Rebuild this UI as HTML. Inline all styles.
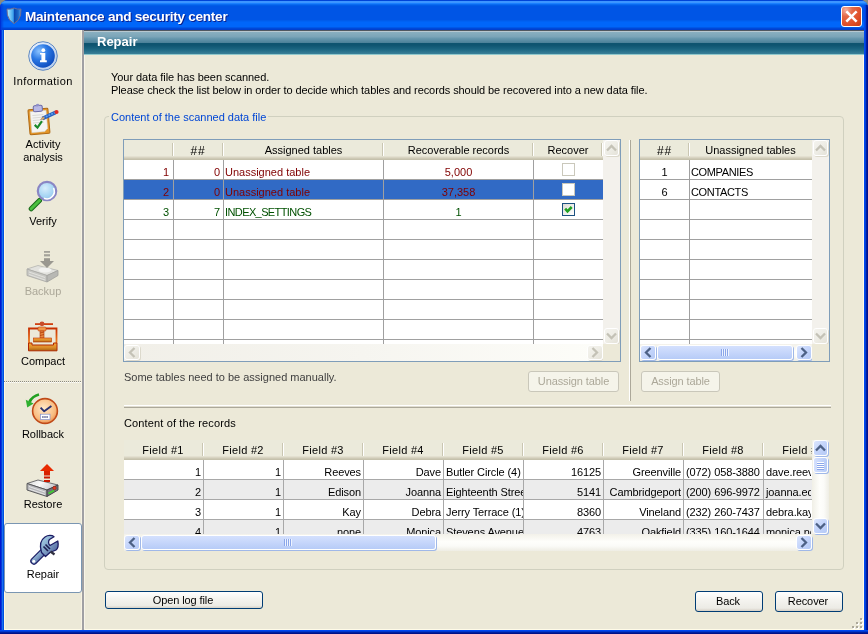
<!DOCTYPE html><html><head><meta charset="utf-8"><style>
*{box-sizing:border-box;margin:0;padding:0}
html,body{width:868px;height:634px;overflow:hidden;background:#8c8a7e}
body{position:relative;font-family:"Liberation Sans",sans-serif;font-size:11px;color:#000}
.a{position:absolute}
.t{position:absolute;white-space:nowrap;line-height:13px;letter-spacing:0}
.c{text-align:center}
.r{text-align:right}
#win{will-change:transform;position:absolute;left:0;top:0;width:868px;height:634px;border-radius:8px 8px 0 0;overflow:hidden;background:#0050e0}
#title{position:absolute;left:0;top:0;width:868px;height:30px;background:linear-gradient(to bottom,#0044d8 0px,#0044d8 1px,#3d95ff 1px,#3d95ff 2px,#3d95ff 2px,#3d95ff 3px,#1a80ff 3px,#1a80ff 4px,#0a6af0 4px,#0a6af0 5px,#005de8 5px,#005de8 6px,#0055e5 6px,#0055e5 7px,#0055e5 7px,#0055e5 8px,#0055e5 8px,#0055e5 9px,#0055e5 9px,#0055e5 10px,#0055e5 10px,#0055e5 11px,#0055e5 11px,#0055e5 12px,#0055e5 12px,#0055e5 13px,#0055e5 13px,#0055e5 14px,#0055e5 14px,#0055e5 15px,#0055e5 15px,#0055e5 16px,#0055e5 16px,#0055e5 17px,#0055e5 17px,#0055e5 18px,#0055e5 18px,#0055e5 19px,#0055e5 19px,#0055e5 20px,#005cec 20px,#005cec 21px,#0062f4 21px,#0062f4 22px,#0066fa 22px,#0066fa 23px,#0066fa 23px,#0066fa 24px,#0066fa 24px,#0066fa 25px,#0066fa 25px,#0066fa 26px,#0066fa 26px,#0066fa 27px,#0058e8 27px,#0058e8 28px,#0048d8 28px,#0048d8 29px,#0040d0 29px,#0040d0 30px)}
#lb{left:0;top:30px;width:4px;height:604px;background:linear-gradient(to right,#0018d0 0,#0018d0 1px,#0838d8 1px,#0838d8 2px,#1870f0 2px,#1870f0 3px,#0050e0 3px)}
#rb{left:864px;top:5px;width:4px;height:629px;background:linear-gradient(to right,#0048f0 0,#0048f0 1px,#0040d8 1px,#0040d8 2px,#0020a0 2px,#0020a0 3px,#001090 3px)}
#bb{left:0;top:630px;width:868px;height:4px;background:linear-gradient(to bottom,#0048f0 0,#0048f0 1px,#0038d0 1px,#0038d0 2px,#0020a0 2px,#0020a0 3px,#001088 3px)}
#client{left:4px;top:30px;width:860px;height:600px;background:#ece9d8;border-left:1px solid #fff8e0;border-right:1px solid #fffbe8;border-bottom:1px solid #fffbe8}
.ttl{position:absolute;left:25px;top:9px;font:bold 13.6px/16px "Liberation Sans",sans-serif;letter-spacing:-0.27px;color:#fff;text-shadow:1px 1px 0 #0a1e8c;white-space:nowrap}
.xbtn{position:absolute;left:841px;top:6px;width:21px;height:21px;border:1px solid #fff;border-radius:3px;
background:radial-gradient(circle at 20% 15%,#f4b0a0 0,#e46a48 30%,#e0502a 65%,#c83c14 100%)}
.hdr{left:84px;top:30px;width:780px;height:25px;
background:linear-gradient(to bottom,#505860 0,#505860 1px,#b8c8d0 1px,#b8c8d0 2px,#8ab0c0 2px,#7aa4b8 7px,#6a9ab0 8px,#4a8098 13px,#0e5470 13px,#0e5470 15px,#1a6480 19px,#3a8098 24px,#80c0c8 24px,#a0d0d0 25px)}
.hdrt{position:absolute;left:97px;top:34px;font:bold 13px/16px "Liberation Sans",sans-serif;color:#fff;white-space:nowrap}
.gb{position:absolute;left:104px;top:116px;width:740px;height:454px;border:1px solid #d0d0bf;border-radius:4px}
.gbl{position:absolute;left:109px;top:110px;padding:0 2px;background:#ece9d8;color:#0046d5;line-height:13px;white-space:nowrap;letter-spacing:0}
.lv{position:absolute;border:1px solid #7f9db9;background:#fff;overflow:hidden}
.lvh{position:absolute;left:0;top:0;height:20px;background:linear-gradient(to bottom,#ebeadb 0,#ebeadb 16px,#e3e0d0 16px,#dcd8c5 17px,#cfcab5 18px,#c5c1ac 20px)}
.hs{position:absolute;top:3px;width:2px;height:13px;border-left:1px solid #cac6b2;border-right:1px solid #fff}
.vg{position:absolute;width:1px;background:#a0a0a0}
.hg{position:absolute;height:1px;background:#a0a0a0}
.sbtrk{position:absolute;background:#f3f1ec}
.dbtn{position:absolute;border:1px solid #fff;border-radius:2px;background:linear-gradient(135deg,#f4f3ee,#e8e6dc);box-shadow:0 0 0 0 #fff}
.ebtn{position:absolute;border:1px solid #fff;border-radius:2px;background:linear-gradient(135deg,#d6e2fc 0,#c4d4f8 50%,#b0c6f4 100%)}
.thumb{position:absolute;border:1px solid #fff;border-radius:2px;background:linear-gradient(to bottom,#cddafc,#c0d0f8 50%,#b8cbf6)}
.btn{position:absolute;padding-right:2px;border:1px solid #003c74;border-radius:3px;background:linear-gradient(to bottom,#fff 0,#f5f4f0 40%,#ecebe5 85%,#d6d0c5 100%);text-align:center;color:#000;line-height:16px;letter-spacing:-0.1px}
.btnd{position:absolute;border:1px solid #c9c7ba;border-radius:3px;background:#f5f4ea;text-align:center;color:#aca899;letter-spacing:-0.1px}
.red{color:#800000}.grn{color:#005000}
.cb{position:absolute;width:13px;height:13px;border:1px solid #cac8bb;background:#fff}
</style></head><body><div id="win">
<div id="title"></div><div class="a" id="lb"></div><div class="a" style="left:0;top:4px;width:4px;height:26px;background:linear-gradient(to right,#0020c8,#0040e0 1px,rgba(0,80,240,0) 4px)"></div><div class="a" id="rb"></div><div class="a" id="bb"></div><div class="a" id="client"></div>
<svg class="a" style="left:4px;top:4px" width="20" height="22" viewBox="0 0 20 22"><defs><linearGradient id="sh" x1="0" x2="1"><stop offset="0" stop-color="#b8f0ff"/><stop offset="0.45" stop-color="#3aa0ee"/><stop offset="0.52" stop-color="#0a48b0"/><stop offset="0.8" stop-color="#1a68c8"/><stop offset="1" stop-color="#5aa8ee"/></linearGradient></defs><path d="M3 5 Q6.5 5.6 10 4 Q13.5 5.6 17 5 L16.6 11 Q15.2 17 10 19.6 Q4.8 17 3.4 11 Z" fill="url(#sh)" stroke="#706c90" stroke-width="1"/></svg>
<div class="ttl">Maintenance and security center</div>
<div class="xbtn"><svg class="a" style="left:0;top:0" width="19" height="19" viewBox="0 0 19 19"><path d="M5.2 5.2 L13.8 13.8 M13.8 5.2 L5.2 13.8" stroke="#fff" stroke-width="2.5" stroke-linecap="square"/></svg></div>
<div class="a" style="left:81px;top:30px;width:1px;height:600px;background:#f7f3e3"></div>
<div class="a" style="left:82px;top:30px;width:2px;height:600px;background:#a0a0a4"></div>
<div class="a" style="left:84px;top:55px;width:1px;height:575px;background:#f8f5e8"></div>
<div class="a hdr"></div><div class="hdrt">Repair</div>
<div class="t c" style="left:4px;top:75px;width:78px;letter-spacing:0.4px">Information</div>
<div class="t c" style="left:4px;top:138px;width:78px;">Activity</div>
<div class="t c" style="left:4px;top:151px;width:78px;">analysis</div>
<div class="t c" style="left:4px;top:215px;width:78px;">Verify</div>
<div class="t c" style="left:4px;top:285px;width:78px;color:#aca899;">Backup</div>
<div class="t c" style="left:4px;top:355px;width:78px;">Compact</div>
<div class="t c" style="left:4px;top:428px;width:78px;">Rollback</div>
<div class="t c" style="left:4px;top:498px;width:78px;">Restore</div>
<div class="a" style="left:4px;top:381px;width:78px;height:1px;background:repeating-linear-gradient(to right,#8c8a80 0,#8c8a80 1px,transparent 1px,transparent 2px)"></div>
<div class="a" style="left:4px;top:382px;width:78px;height:1px;background:repeating-linear-gradient(to right,#fff 0,#fff 1px,transparent 1px,transparent 2px)"></div>
<div class="a" style="left:4px;top:523px;width:78px;height:70px;border:1px solid #7a96b2;border-radius:3px;background:#fff"></div>
<div class="t c" style="left:4px;top:568px;width:78px;">Repair</div>
<div class="t " style="left:111px;top:71px;letter-spacing:-0.05px">Your data file has been scanned.</div>
<div class="t " style="left:111px;top:84px;letter-spacing:-0.08px">Please check the list below in order to decide which tables and records should be recovered into a new data file.</div>
<div class="gb"></div>
<div class="gbl" style="top:111px">Content of the scanned data file</div>
<div class="a" style="left:123px;top:139px;width:498px;height:223px;border:1px solid #7f9db9;background:#fff"></div>
<div class="a" style="left:124px;top:140px;width:479px;height:20px;background:linear-gradient(to bottom,#ebeadb 0,#ebeadb 16px,#e3e0d0 16px,#e3e0d0 17px,#d8d4c2 17px,#d8d4c2 18px,#cdc9b5 18px,#cdc9b5 19px,#c5c1ac 19px)"></div>
<div class="a" style="left:172px;top:143px;width:1px;height:13px;background:#cac6b2"></div>
<div class="a" style="left:173px;top:143px;width:1px;height:13px;background:#fff"></div>
<div class="a" style="left:222px;top:143px;width:1px;height:13px;background:#cac6b2"></div>
<div class="a" style="left:223px;top:143px;width:1px;height:13px;background:#fff"></div>
<div class="a" style="left:382px;top:143px;width:1px;height:13px;background:#cac6b2"></div>
<div class="a" style="left:383px;top:143px;width:1px;height:13px;background:#fff"></div>
<div class="a" style="left:532px;top:143px;width:1px;height:13px;background:#cac6b2"></div>
<div class="a" style="left:533px;top:143px;width:1px;height:13px;background:#fff"></div>
<div class="a" style="left:601px;top:143px;width:1px;height:13px;background:#cac6b2"></div>
<div class="a" style="left:602px;top:143px;width:1px;height:13px;background:#fff"></div>
<div class="t" style="left:173px;width:50px;text-align:center;top:145px;font-size:12px;letter-spacing:0.8px">##</div>
<div class="t " style="left:223px;width:161px;text-align:center;top:144px">Assigned tables</div>
<div class="t " style="left:383px;width:151px;text-align:center;top:144px">Recoverable records</div>
<div class="t " style="left:533px;width:70px;text-align:center;top:144px">Recover</div>
<div class="a" style="left:124px;top:180px;width:479px;height:19px;background:#316ac5"></div>
<div class="a" style="left:173px;top:160px;width:1px;height:184px;background:#a0a0a0"></div>
<div class="a" style="left:223px;top:160px;width:1px;height:184px;background:#a0a0a0"></div>
<div class="a" style="left:383px;top:160px;width:1px;height:184px;background:#a0a0a0"></div>
<div class="a" style="left:533px;top:160px;width:1px;height:184px;background:#a0a0a0"></div>
<div class="a" style="left:124px;top:179px;width:479px;height:1px;background:#a0a0a0"></div>
<div class="a" style="left:124px;top:199px;width:479px;height:1px;background:#a0a0a0"></div>
<div class="a" style="left:124px;top:219px;width:479px;height:1px;background:#a0a0a0"></div>
<div class="a" style="left:124px;top:239px;width:479px;height:1px;background:#a0a0a0"></div>
<div class="a" style="left:124px;top:259px;width:479px;height:1px;background:#a0a0a0"></div>
<div class="a" style="left:124px;top:279px;width:479px;height:1px;background:#a0a0a0"></div>
<div class="a" style="left:124px;top:299px;width:479px;height:1px;background:#a0a0a0"></div>
<div class="a" style="left:124px;top:319px;width:479px;height:1px;background:#a0a0a0"></div>
<div class="a" style="left:124px;top:339px;width:479px;height:1px;background:#a0a0a0"></div>
<div class="t red" style="left:124px;width:45px;text-align:right;top:166px">1</div>
<div class="t red" style="left:174px;width:46px;text-align:right;top:166px">0</div>
<div class="t red" style="left:225px;top:166px">Unassigned table</div>
<div class="t red" style="left:384px;width:149px;text-align:center;top:166px">5,000</div>
<div class="cb" style="left:562px;top:163px"></div>
<div class="t red" style="left:124px;width:45px;text-align:right;top:186px">2</div>
<div class="t red" style="left:174px;width:46px;text-align:right;top:186px">0</div>
<div class="t red" style="left:225px;top:186px">Unassigned table</div>
<div class="t red" style="left:384px;width:149px;text-align:center;top:186px">37,358</div>
<div class="cb" style="left:562px;top:183px"></div>
<div class="t grn" style="left:124px;width:45px;text-align:right;top:206px">3</div>
<div class="t grn" style="left:174px;width:46px;text-align:right;top:206px">7</div>
<div class="t grn" style="left:225px;letter-spacing:-0.6px;top:206px">INDEX_SETTINGS</div>
<div class="t grn" style="left:384px;width:149px;text-align:center;top:206px">1</div>
<div class="a" style="left:562px;top:203px;width:13px;height:13px;border:1px solid #1c5180;background:linear-gradient(135deg,#dcdcd7,#fff)"><svg class="a" style="left:0;top:0" width="11" height="11" viewBox="0 0 11 11"><path d="M2.2 4.6 L4.5 7.3 L8.7 3" fill="none" stroke="#21a121" stroke-width="2.6"/></svg></div>
<div class="a" style="left:603px;top:140px;width:17px;height:204px;background:#f3f1ec"></div>
<div class="a" style="left:604px;top:140px;width:15px;height:16px;border:1px solid #fff;border-radius:3px;background:linear-gradient(135deg,#f4f3ee 0,#eeede6 50%,#e4e2d8 100%);box-shadow:1px 1px 0 #dcd9cc"><svg class="a" style="left:0;top:0" width="13" height="14" viewBox="0 0 13 14"><path d="M2.0,9.5 L6.5,5.0 L11.0,9.5" fill="none" stroke="#c4c2b6" stroke-width="2.3" stroke-linecap="butt"/></svg></div>
<div class="a" style="left:604px;top:328px;width:15px;height:16px;border:1px solid #fff;border-radius:3px;background:linear-gradient(135deg,#f4f3ee 0,#eeede6 50%,#e4e2d8 100%);box-shadow:1px 1px 0 #dcd9cc"><svg class="a" style="left:0;top:0" width="13" height="14" viewBox="0 0 13 14"><path d="M2.0,4.5 L6.5,9.0 L11.0,4.5" fill="none" stroke="#c4c2b6" stroke-width="2.3" stroke-linecap="butt"/></svg></div>
<div class="a" style="left:124px;top:344px;width:479px;height:17px;background:linear-gradient(to right,#f1efe8,#f6f5f0 50%,#fdfdf9)"></div>
<div class="a" style="left:124px;top:345px;width:16px;height:15px;border:1px solid #fff;border-radius:3px;background:linear-gradient(135deg,#f4f3ee 0,#eeede6 50%,#e4e2d8 100%);box-shadow:1px 1px 0 #dcd9cc"><svg class="a" style="left:0;top:0" width="14" height="13" viewBox="0 0 14 13"><path d="M9.5,2.0 L5.0,6.5 L9.5,11.0" fill="none" stroke="#c4c2b6" stroke-width="2.3" stroke-linecap="butt"/></svg></div>
<div class="a" style="left:587px;top:345px;width:16px;height:15px;border:1px solid #fff;border-radius:3px;background:linear-gradient(135deg,#f4f3ee 0,#eeede6 50%,#e4e2d8 100%);box-shadow:1px 1px 0 #dcd9cc"><svg class="a" style="left:0;top:0" width="14" height="13" viewBox="0 0 14 13"><path d="M4.5,2.0 L9.0,6.5 L4.5,11.0" fill="none" stroke="#c4c2b6" stroke-width="2.3" stroke-linecap="butt"/></svg></div>
<div class="a" style="left:603px;top:344px;width:17px;height:17px;background:#ece9d8"></div>
<div class="a" style="left:639px;top:139px;width:191px;height:223px;border:1px solid #7f9db9;background:#fff"></div>
<div class="a" style="left:640px;top:140px;width:172px;height:20px;background:linear-gradient(to bottom,#ebeadb 0,#ebeadb 16px,#e3e0d0 16px,#e3e0d0 17px,#d8d4c2 17px,#d8d4c2 18px,#cdc9b5 18px,#cdc9b5 19px,#c5c1ac 19px)"></div>
<div class="a" style="left:688px;top:143px;width:1px;height:13px;background:#cac6b2"></div>
<div class="a" style="left:689px;top:143px;width:1px;height:13px;background:#fff"></div>
<div class="t" style="left:640px;width:49px;text-align:center;top:145px;font-size:12px;letter-spacing:0.8px">##</div>
<div class="t " style="left:689px;width:123px;text-align:center;top:144px">Unassigned tables</div>
<div class="a" style="left:689px;top:160px;width:1px;height:184px;background:#a0a0a0"></div>
<div class="a" style="left:640px;top:179px;width:172px;height:1px;background:#a0a0a0"></div>
<div class="a" style="left:640px;top:199px;width:172px;height:1px;background:#a0a0a0"></div>
<div class="a" style="left:640px;top:219px;width:172px;height:1px;background:#a0a0a0"></div>
<div class="a" style="left:640px;top:239px;width:172px;height:1px;background:#a0a0a0"></div>
<div class="a" style="left:640px;top:259px;width:172px;height:1px;background:#a0a0a0"></div>
<div class="a" style="left:640px;top:279px;width:172px;height:1px;background:#a0a0a0"></div>
<div class="a" style="left:640px;top:299px;width:172px;height:1px;background:#a0a0a0"></div>
<div class="a" style="left:640px;top:319px;width:172px;height:1px;background:#a0a0a0"></div>
<div class="a" style="left:640px;top:339px;width:172px;height:1px;background:#a0a0a0"></div>
<div class="t " style="left:640px;width:49px;text-align:center;top:166px">1</div>
<div class="t " style="left:691px;letter-spacing:-0.35px;top:166px">COMPANIES</div>
<div class="t " style="left:640px;width:49px;text-align:center;top:186px">6</div>
<div class="t " style="left:691px;letter-spacing:-0.35px;top:186px">CONTACTS</div>
<div class="a" style="left:812px;top:140px;width:17px;height:204px;background:#f3f1ec"></div>
<div class="a" style="left:813px;top:140px;width:15px;height:16px;border:1px solid #fff;border-radius:3px;background:linear-gradient(135deg,#f4f3ee 0,#eeede6 50%,#e4e2d8 100%);box-shadow:1px 1px 0 #dcd9cc"><svg class="a" style="left:0;top:0" width="13" height="14" viewBox="0 0 13 14"><path d="M2.0,9.5 L6.5,5.0 L11.0,9.5" fill="none" stroke="#c4c2b6" stroke-width="2.3" stroke-linecap="butt"/></svg></div>
<div class="a" style="left:813px;top:328px;width:15px;height:16px;border:1px solid #fff;border-radius:3px;background:linear-gradient(135deg,#f4f3ee 0,#eeede6 50%,#e4e2d8 100%);box-shadow:1px 1px 0 #dcd9cc"><svg class="a" style="left:0;top:0" width="13" height="14" viewBox="0 0 13 14"><path d="M2.0,4.5 L6.5,9.0 L11.0,4.5" fill="none" stroke="#c4c2b6" stroke-width="2.3" stroke-linecap="butt"/></svg></div>
<div class="a" style="left:640px;top:344px;width:172px;height:17px;background:linear-gradient(to bottom,#f3f1e9,#fefefb 45%,#fbfbf8 70%,#eeede4)"></div>
<div class="a" style="left:640px;top:345px;width:16px;height:15px;border:1px solid #fff;border-radius:3px;background:linear-gradient(135deg,#dce6fd 0,#c6d6fb 45%,#b4c9f6 100%);box-shadow:1px 1px 0 #a0b8e8"><svg class="a" style="left:0;top:0" width="14" height="13" viewBox="0 0 14 13"><path d="M9.5,2.0 L5.0,6.5 L9.5,11.0" fill="none" stroke="#4d6185" stroke-width="2.3" stroke-linecap="butt"/></svg></div>
<div class="a" style="left:657px;top:345px;width:136px;height:15px;border:1px solid #fff;border-radius:3px;background:linear-gradient(to bottom,#d4e0fd,#c6d6fb 50%,#b6cbf7);box-shadow:1px 1px 0 #a0b8e8"><div class="a" style="left:63px;top:3px;width:1px;height:7px;background:#8aa6ea"></div><div class="a" style="left:64px;top:3px;width:1px;height:7px;background:#eef3fe"></div><div class="a" style="left:65px;top:3px;width:1px;height:7px;background:#8aa6ea"></div><div class="a" style="left:66px;top:3px;width:1px;height:7px;background:#eef3fe"></div><div class="a" style="left:67px;top:3px;width:1px;height:7px;background:#8aa6ea"></div><div class="a" style="left:68px;top:3px;width:1px;height:7px;background:#eef3fe"></div><div class="a" style="left:69px;top:3px;width:1px;height:7px;background:#8aa6ea"></div><div class="a" style="left:70px;top:3px;width:1px;height:7px;background:#eef3fe"></div></div>
<div class="a" style="left:796px;top:345px;width:16px;height:15px;border:1px solid #fff;border-radius:3px;background:linear-gradient(135deg,#dce6fd 0,#c6d6fb 45%,#b4c9f6 100%);box-shadow:1px 1px 0 #a0b8e8"><svg class="a" style="left:0;top:0" width="14" height="13" viewBox="0 0 14 13"><path d="M4.5,2.0 L9.0,6.5 L4.5,11.0" fill="none" stroke="#4d6185" stroke-width="2.3" stroke-linecap="butt"/></svg></div>
<div class="a" style="left:812px;top:344px;width:17px;height:17px;background:#ece9d8"></div>
<div class="a" style="left:629px;top:140px;width:1px;height:261px;background:#fff"></div>
<div class="a" style="left:630px;top:140px;width:1px;height:261px;background:#aca899"></div>
<div class="t " style="left:124px;top:371px;color:#404040;">Some tables need to be assigned manually.</div>
<div class="btnd" style="left:528px;top:371px;width:91px;height:21px;line-height:18px">Unassign table</div>
<div class="btnd" style="left:641px;top:371px;width:79px;height:21px;line-height:18px">Assign table</div>
<div class="a" style="left:124px;top:405px;width:707px;height:1px;background:#fff"></div>
<div class="a" style="left:124px;top:406px;width:707px;height:1px;background:#e0ddd0"></div>
<div class="a" style="left:124px;top:407px;width:707px;height:1px;background:#aca899"></div>
<div class="t " style="left:124px;top:417px;letter-spacing:0.14px">Content of the records</div>
<div class="a" style="left:124px;top:460px;width:688px;height:74px;background:#fff"></div>
<div class="a" style="left:124px;top:440px;width:688px;height:20px;background:linear-gradient(to bottom,#ebeadb 0,#ebeadb 16px,#e3e0d0 16px,#e3e0d0 17px,#d8d4c2 17px,#d8d4c2 18px,#cdc9b5 18px,#cdc9b5 19px,#c5c1ac 19px)"></div>
<div class="a" style="left:202px;top:443px;width:1px;height:13px;background:#cac6b2"></div>
<div class="a" style="left:203px;top:443px;width:1px;height:13px;background:#fff"></div>
<div class="a" style="left:282px;top:443px;width:1px;height:13px;background:#cac6b2"></div>
<div class="a" style="left:283px;top:443px;width:1px;height:13px;background:#fff"></div>
<div class="a" style="left:362px;top:443px;width:1px;height:13px;background:#cac6b2"></div>
<div class="a" style="left:363px;top:443px;width:1px;height:13px;background:#fff"></div>
<div class="a" style="left:442px;top:443px;width:1px;height:13px;background:#cac6b2"></div>
<div class="a" style="left:443px;top:443px;width:1px;height:13px;background:#fff"></div>
<div class="a" style="left:522px;top:443px;width:1px;height:13px;background:#cac6b2"></div>
<div class="a" style="left:523px;top:443px;width:1px;height:13px;background:#fff"></div>
<div class="a" style="left:602px;top:443px;width:1px;height:13px;background:#cac6b2"></div>
<div class="a" style="left:603px;top:443px;width:1px;height:13px;background:#fff"></div>
<div class="a" style="left:682px;top:443px;width:1px;height:13px;background:#cac6b2"></div>
<div class="a" style="left:683px;top:443px;width:1px;height:13px;background:#fff"></div>
<div class="a" style="left:762px;top:443px;width:1px;height:13px;background:#cac6b2"></div>
<div class="a" style="left:763px;top:443px;width:1px;height:13px;background:#fff"></div>
<div class="a" style="left:124px;top:440px;width:688px;height:16px;overflow:hidden">
<div class="t" style="left:-1px;width:80px;text-align:center;top:4px;letter-spacing:0.3px">Field #1</div>
<div class="t" style="left:79px;width:80px;text-align:center;top:4px;letter-spacing:0.3px">Field #2</div>
<div class="t" style="left:159px;width:80px;text-align:center;top:4px;letter-spacing:0.3px">Field #3</div>
<div class="t" style="left:239px;width:80px;text-align:center;top:4px;letter-spacing:0.3px">Field #4</div>
<div class="t" style="left:319px;width:80px;text-align:center;top:4px;letter-spacing:0.3px">Field #5</div>
<div class="t" style="left:399px;width:80px;text-align:center;top:4px;letter-spacing:0.3px">Field #6</div>
<div class="t" style="left:479px;width:80px;text-align:center;top:4px;letter-spacing:0.3px">Field #7</div>
<div class="t" style="left:559px;width:80px;text-align:center;top:4px;letter-spacing:0.3px">Field #8</div>
<div class="t" style="left:639px;width:80px;text-align:center;top:4px;letter-spacing:0.3px">Field #9</div>
</div>
<div class="a" style="left:124px;top:480px;width:688px;height:19px;background:#ececec"></div>
<div class="a" style="left:124px;top:520px;width:688px;height:14px;background:#ececec"></div>
<div class="a" style="left:203px;top:460px;width:1px;height:74px;background:#a8a8a8"></div>
<div class="a" style="left:283px;top:460px;width:1px;height:74px;background:#a8a8a8"></div>
<div class="a" style="left:363px;top:460px;width:1px;height:74px;background:#a8a8a8"></div>
<div class="a" style="left:443px;top:460px;width:1px;height:74px;background:#a8a8a8"></div>
<div class="a" style="left:523px;top:460px;width:1px;height:74px;background:#a8a8a8"></div>
<div class="a" style="left:603px;top:460px;width:1px;height:74px;background:#a8a8a8"></div>
<div class="a" style="left:683px;top:460px;width:1px;height:74px;background:#a8a8a8"></div>
<div class="a" style="left:763px;top:460px;width:1px;height:74px;background:#a8a8a8"></div>
<div class="a" style="left:124px;top:479px;width:688px;height:1px;background:#a8a8a8"></div>
<div class="a" style="left:124px;top:499px;width:688px;height:1px;background:#a8a8a8"></div>
<div class="a" style="left:124px;top:519px;width:688px;height:1px;background:#a8a8a8"></div>
<div class="a" style="left:124px;top:460px;width:79px;height:19px;overflow:hidden">
<div class="t" style="left:0;width:77px;text-align:right;top:6px;letter-spacing:-0.1px">1</div>
</div>
<div class="a" style="left:204px;top:460px;width:79px;height:19px;overflow:hidden">
<div class="t" style="left:0;width:77px;text-align:right;top:6px;letter-spacing:-0.1px">1</div>
</div>
<div class="a" style="left:284px;top:460px;width:79px;height:19px;overflow:hidden">
<div class="t" style="left:0;width:77px;text-align:right;top:6px;letter-spacing:-0.1px">Reeves</div>
</div>
<div class="a" style="left:364px;top:460px;width:79px;height:19px;overflow:hidden">
<div class="t" style="left:0;width:77px;text-align:right;top:6px;letter-spacing:-0.1px">Dave</div>
</div>
<div class="a" style="left:444px;top:460px;width:79px;height:19px;overflow:hidden">
<div class="t" style="left:2px;top:6px;letter-spacing:-0.1px">Butler Circle (4)</div>
</div>
<div class="a" style="left:524px;top:460px;width:79px;height:19px;overflow:hidden">
<div class="t" style="left:0;width:77px;text-align:right;top:6px;letter-spacing:-0.1px">16125</div>
</div>
<div class="a" style="left:604px;top:460px;width:79px;height:19px;overflow:hidden">
<div class="t" style="left:0;width:77px;text-align:right;top:6px;letter-spacing:-0.1px">Greenville</div>
</div>
<div class="a" style="left:684px;top:460px;width:79px;height:19px;overflow:hidden">
<div class="t" style="left:2px;top:6px;letter-spacing:-0.1px">(072) 058-3880</div>
</div>
<div class="a" style="left:764px;top:460px;width:47px;height:19px;overflow:hidden">
<div class="t" style="left:2px;top:6px;letter-spacing:-0.1px">dave.reeves@</div>
</div>
<div class="a" style="left:124px;top:480px;width:79px;height:19px;overflow:hidden">
<div class="t" style="left:0;width:77px;text-align:right;top:6px;letter-spacing:-0.1px">2</div>
</div>
<div class="a" style="left:204px;top:480px;width:79px;height:19px;overflow:hidden">
<div class="t" style="left:0;width:77px;text-align:right;top:6px;letter-spacing:-0.1px">1</div>
</div>
<div class="a" style="left:284px;top:480px;width:79px;height:19px;overflow:hidden">
<div class="t" style="left:0;width:77px;text-align:right;top:6px;letter-spacing:-0.1px">Edison</div>
</div>
<div class="a" style="left:364px;top:480px;width:79px;height:19px;overflow:hidden">
<div class="t" style="left:0;width:77px;text-align:right;top:6px;letter-spacing:-0.1px">Joanna</div>
</div>
<div class="a" style="left:444px;top:480px;width:79px;height:19px;overflow:hidden">
<div class="t" style="left:2px;top:6px;letter-spacing:-0.1px">Eighteenth Street</div>
</div>
<div class="a" style="left:524px;top:480px;width:79px;height:19px;overflow:hidden">
<div class="t" style="left:0;width:77px;text-align:right;top:6px;letter-spacing:-0.1px">5141</div>
</div>
<div class="a" style="left:604px;top:480px;width:79px;height:19px;overflow:hidden">
<div class="t" style="left:0;width:77px;text-align:right;top:6px;letter-spacing:-0.1px">Cambridgeport</div>
</div>
<div class="a" style="left:684px;top:480px;width:79px;height:19px;overflow:hidden">
<div class="t" style="left:2px;top:6px;letter-spacing:-0.1px">(200) 696-9972</div>
</div>
<div class="a" style="left:764px;top:480px;width:47px;height:19px;overflow:hidden">
<div class="t" style="left:2px;top:6px;letter-spacing:-0.1px">joanna.edison</div>
</div>
<div class="a" style="left:124px;top:500px;width:79px;height:19px;overflow:hidden">
<div class="t" style="left:0;width:77px;text-align:right;top:6px;letter-spacing:-0.1px">3</div>
</div>
<div class="a" style="left:204px;top:500px;width:79px;height:19px;overflow:hidden">
<div class="t" style="left:0;width:77px;text-align:right;top:6px;letter-spacing:-0.1px">1</div>
</div>
<div class="a" style="left:284px;top:500px;width:79px;height:19px;overflow:hidden">
<div class="t" style="left:0;width:77px;text-align:right;top:6px;letter-spacing:-0.1px">Kay</div>
</div>
<div class="a" style="left:364px;top:500px;width:79px;height:19px;overflow:hidden">
<div class="t" style="left:0;width:77px;text-align:right;top:6px;letter-spacing:-0.1px">Debra</div>
</div>
<div class="a" style="left:444px;top:500px;width:79px;height:19px;overflow:hidden">
<div class="t" style="left:2px;top:6px;letter-spacing:-0.1px">Jerry Terrace (1)</div>
</div>
<div class="a" style="left:524px;top:500px;width:79px;height:19px;overflow:hidden">
<div class="t" style="left:0;width:77px;text-align:right;top:6px;letter-spacing:-0.1px">8360</div>
</div>
<div class="a" style="left:604px;top:500px;width:79px;height:19px;overflow:hidden">
<div class="t" style="left:0;width:77px;text-align:right;top:6px;letter-spacing:-0.1px">Vineland</div>
</div>
<div class="a" style="left:684px;top:500px;width:79px;height:19px;overflow:hidden">
<div class="t" style="left:2px;top:6px;letter-spacing:-0.1px">(232) 260-7437</div>
</div>
<div class="a" style="left:764px;top:500px;width:47px;height:19px;overflow:hidden">
<div class="t" style="left:2px;top:6px;letter-spacing:-0.1px">debra.kay@</div>
</div>
<div class="a" style="left:124px;top:520px;width:79px;height:14px;overflow:hidden">
<div class="t" style="left:0;width:77px;text-align:right;top:6px;letter-spacing:-0.1px">4</div>
</div>
<div class="a" style="left:204px;top:520px;width:79px;height:14px;overflow:hidden">
<div class="t" style="left:0;width:77px;text-align:right;top:6px;letter-spacing:-0.1px">1</div>
</div>
<div class="a" style="left:284px;top:520px;width:79px;height:14px;overflow:hidden">
<div class="t" style="left:0;width:77px;text-align:right;top:6px;letter-spacing:-0.1px">none</div>
</div>
<div class="a" style="left:364px;top:520px;width:79px;height:14px;overflow:hidden">
<div class="t" style="left:0;width:77px;text-align:right;top:6px;letter-spacing:-0.1px">Monica</div>
</div>
<div class="a" style="left:444px;top:520px;width:79px;height:14px;overflow:hidden">
<div class="t" style="left:2px;top:6px;letter-spacing:-0.1px">Stevens Avenue</div>
</div>
<div class="a" style="left:524px;top:520px;width:79px;height:14px;overflow:hidden">
<div class="t" style="left:0;width:77px;text-align:right;top:6px;letter-spacing:-0.1px">4763</div>
</div>
<div class="a" style="left:604px;top:520px;width:79px;height:14px;overflow:hidden">
<div class="t" style="left:0;width:77px;text-align:right;top:6px;letter-spacing:-0.1px">Oakfield</div>
</div>
<div class="a" style="left:684px;top:520px;width:79px;height:14px;overflow:hidden">
<div class="t" style="left:2px;top:6px;letter-spacing:-0.1px">(335) 160-1644</div>
</div>
<div class="a" style="left:764px;top:520px;width:47px;height:14px;overflow:hidden">
<div class="t" style="left:2px;top:6px;letter-spacing:-0.1px">monica.none</div>
</div>
<div class="a" style="left:812px;top:440px;width:17px;height:94px;background:linear-gradient(to right,#f0efe6,#fefefb 45%,#fbfbf8 70%,#eeede4)"></div>
<div class="a" style="left:813px;top:440px;width:15px;height:16px;border:1px solid #fff;border-radius:3px;background:linear-gradient(135deg,#dce6fd 0,#c6d6fb 45%,#b4c9f6 100%);box-shadow:1px 1px 0 #a0b8e8"><svg class="a" style="left:0;top:0" width="13" height="14" viewBox="0 0 13 14"><path d="M2.0,9.5 L6.5,5.0 L11.0,9.5" fill="none" stroke="#4d6185" stroke-width="2.3" stroke-linecap="butt"/></svg></div>
<div class="a" style="left:813px;top:457px;width:15px;height:16px;border:1px solid #fff;border-radius:3px;background:linear-gradient(to right,#d4e0fd,#c6d6fb 50%,#b6cbf7);box-shadow:1px 1px 0 #a0b8e8"><div class="a" style="top:4px;left:3px;height:1px;width:7px;background:#fff"></div><div class="a" style="top:5px;left:3px;height:1px;width:7px;background:#8aa6ea"></div><div class="a" style="top:6px;left:3px;height:1px;width:7px;background:#fff"></div><div class="a" style="top:7px;left:3px;height:1px;width:7px;background:#8aa6ea"></div><div class="a" style="top:8px;left:3px;height:1px;width:7px;background:#fff"></div><div class="a" style="top:9px;left:3px;height:1px;width:7px;background:#8aa6ea"></div><div class="a" style="top:10px;left:3px;height:1px;width:7px;background:#fff"></div><div class="a" style="top:11px;left:3px;height:1px;width:7px;background:#8aa6ea"></div></div>
<div class="a" style="left:813px;top:518px;width:15px;height:16px;border:1px solid #fff;border-radius:3px;background:linear-gradient(135deg,#dce6fd 0,#c6d6fb 45%,#b4c9f6 100%);box-shadow:1px 1px 0 #a0b8e8"><svg class="a" style="left:0;top:0" width="13" height="14" viewBox="0 0 13 14"><path d="M2.0,4.5 L6.5,9.0 L11.0,4.5" fill="none" stroke="#4d6185" stroke-width="2.3" stroke-linecap="butt"/></svg></div>
<div class="a" style="left:124px;top:534px;width:688px;height:17px;background:linear-gradient(to bottom,#f3f1e9,#fefefb 45%,#fbfbf8 70%,#eeede4)"></div>
<div class="a" style="left:124px;top:535px;width:16px;height:15px;border:1px solid #fff;border-radius:3px;background:linear-gradient(135deg,#dce6fd 0,#c6d6fb 45%,#b4c9f6 100%);box-shadow:1px 1px 0 #a0b8e8"><svg class="a" style="left:0;top:0" width="14" height="13" viewBox="0 0 14 13"><path d="M9.5,2.0 L5.0,6.5 L9.5,11.0" fill="none" stroke="#4d6185" stroke-width="2.3" stroke-linecap="butt"/></svg></div>
<div class="a" style="left:141px;top:535px;width:295px;height:15px;border:1px solid #fff;border-radius:3px;background:linear-gradient(to bottom,#d4e0fd,#c6d6fb 50%,#b6cbf7);box-shadow:1px 1px 0 #a0b8e8"><div class="a" style="left:142px;top:3px;width:1px;height:7px;background:#8aa6ea"></div><div class="a" style="left:143px;top:3px;width:1px;height:7px;background:#eef3fe"></div><div class="a" style="left:144px;top:3px;width:1px;height:7px;background:#8aa6ea"></div><div class="a" style="left:145px;top:3px;width:1px;height:7px;background:#eef3fe"></div><div class="a" style="left:146px;top:3px;width:1px;height:7px;background:#8aa6ea"></div><div class="a" style="left:147px;top:3px;width:1px;height:7px;background:#eef3fe"></div><div class="a" style="left:148px;top:3px;width:1px;height:7px;background:#8aa6ea"></div><div class="a" style="left:149px;top:3px;width:1px;height:7px;background:#eef3fe"></div></div>
<div class="a" style="left:796px;top:535px;width:16px;height:15px;border:1px solid #fff;border-radius:3px;background:linear-gradient(135deg,#dce6fd 0,#c6d6fb 45%,#b4c9f6 100%);box-shadow:1px 1px 0 #a0b8e8"><svg class="a" style="left:0;top:0" width="14" height="13" viewBox="0 0 14 13"><path d="M4.5,2.0 L9.0,6.5 L4.5,11.0" fill="none" stroke="#4d6185" stroke-width="2.3" stroke-linecap="butt"/></svg></div>
<div class="btn" style="left:105px;top:591px;width:158px;height:18px;line-height:16px">Open log file</div>
<div class="btn" style="left:695px;top:591px;width:68px;height:21px;line-height:19px">Back</div>
<div class="btn" style="left:775px;top:591px;width:68px;height:21px;line-height:19px">Recover</div>
<div class="a" style="left:861px;top:619px;width:2px;height:2px;background:#fff"></div>
<div class="a" style="left:860px;top:618px;width:2px;height:2px;background:#aca899"></div>
<div class="a" style="left:857px;top:623px;width:2px;height:2px;background:#fff"></div>
<div class="a" style="left:856px;top:622px;width:2px;height:2px;background:#aca899"></div>
<div class="a" style="left:861px;top:623px;width:2px;height:2px;background:#fff"></div>
<div class="a" style="left:860px;top:622px;width:2px;height:2px;background:#aca899"></div>
<div class="a" style="left:853px;top:627px;width:2px;height:2px;background:#fff"></div>
<div class="a" style="left:852px;top:626px;width:2px;height:2px;background:#aca899"></div>
<div class="a" style="left:857px;top:627px;width:2px;height:2px;background:#fff"></div>
<div class="a" style="left:856px;top:626px;width:2px;height:2px;background:#aca899"></div>
<div class="a" style="left:861px;top:627px;width:2px;height:2px;background:#fff"></div>
<div class="a" style="left:860px;top:626px;width:2px;height:2px;background:#aca899"></div>

<svg class="a" style="left:27px;top:40px" width="32" height="32" viewBox="0 0 32 32">
 <defs>
  <radialGradient id="ib" cx="0.33" cy="0.3" r="0.8"><stop offset="0" stop-color="#8cc4ff"/><stop offset="0.45" stop-color="#2a78e4"/><stop offset="1" stop-color="#0a46b8"/></radialGradient>
  <linearGradient id="ir" x1="0" y1="0" x2="1" y2="1"><stop offset="0" stop-color="#f0f6ff"/><stop offset="1" stop-color="#b0c8ea"/></linearGradient>
 </defs>
 <circle cx="16" cy="16" r="14.3" fill="url(#ir)" stroke="#5e88c0" stroke-width="1"/>
 <circle cx="16" cy="16" r="11.8" fill="url(#ib)"/>
 <circle cx="16.3" cy="10.2" r="1.9" fill="#fff"/>
 <path d="M13 13 H18.3 V20.2 H19.8 V22.2 H13 V20.2 H14.4 V14.6 H13 Z" fill="#fff"/>
</svg>
<svg class="a" style="left:26px;top:102px" width="34" height="34" viewBox="0 0 34 34">
 <g transform="rotate(-5 13 20)">
 <rect x="3" y="7" width="20" height="25" rx="1" fill="#e49628" stroke="#b06a14" stroke-width="1"/>
 <path d="M5 9 H21 V27 L18 30 H5 Z" fill="#f4f4f2" stroke="#d0d0c8" stroke-width="0.5"/>
 <path d="M7 13 H18 M7 15.5 H18 M7 18 H18 M7 20.5 H18" stroke="#d4d4d0" stroke-width="0.8"/>
 <rect x="8.5" y="3.5" width="9" height="6" rx="1.5" fill="#b8b8e4" stroke="#6a6aa8" stroke-width="1"/>
 <rect x="11.5" y="1.8" width="3" height="2.5" rx="1" fill="#9090c8"/>
 <path d="M8.5 22.5 L11 25.5 L16 19.5" fill="none" stroke="#1a8a2a" stroke-width="2.2"/>
 </g>
 <path d="M16.5 16.5 L29.5 10.5" stroke="#2a60c0" stroke-width="3.6"/>
 <path d="M17 16 L29 10.5" stroke="#5aa0f0" stroke-width="1.6" stroke-dasharray="2 1"/>
 <path d="M14.5 17.5 L17.5 14.2 L18.6 17.2 Z" fill="#e0b070" stroke="#806040" stroke-width="0.4"/>
 <circle cx="30.5" cy="10" r="2.1" fill="#e02a20"/>
</svg>
<svg class="a" style="left:26px;top:178px" width="34" height="34" viewBox="0 0 34 34">
 <defs><radialGradient id="lens" cx="0.4" cy="0.35" r="0.7"><stop offset="0" stop-color="#d8eefc"/><stop offset="0.6" stop-color="#a8d6f4"/><stop offset="1" stop-color="#90c0e8"/></radialGradient></defs>
 <path d="M5.2 30.8 L13.5 22.5" stroke="#1a6a1a" stroke-width="5" stroke-linecap="round"/>
 <path d="M5.2 30.8 L13.5 22.5" stroke="#4cc040" stroke-width="3" stroke-linecap="round"/>
 <circle cx="21" cy="13" r="9.2" fill="url(#lens)" stroke="#8a86c4" stroke-width="2.2"/>
 <path d="M27.5 10 A7.5 7.5 0 0 1 18 20.3" fill="none" stroke="#fff" stroke-width="1.6"/>
</svg>
<svg class="a" style="left:26px;top:248px" width="34" height="36" viewBox="0 0 34 36">
 <path d="M1 21 L12 17.5 L32 22.5 L21 27.5 Z" fill="#e2e2de" stroke="#b4b4b0" stroke-width="0.8"/>
 <path d="M1 21 L21 27.5 L21 34 L1 27.5 Z" fill="#c8c8c4" stroke="#a8a8a4" stroke-width="0.8"/>
 <path d="M21 27.5 L32 22.5 L32 27.5 L21 34 Z" fill="#b8b8b4" stroke="#a0a09c" stroke-width="0.8"/>
 <path d="M3 24 L19 29.5 M3 26.5 L19 32" stroke="#e8e8e4" stroke-width="0.8"/>
 <ellipse cx="19" cy="22" rx="6.5" ry="2.6" fill="#f2f2f0"/>
 <rect x="18" y="3" width="6" height="1.8" fill="#a4a29a"/>
 <rect x="18" y="6.2" width="6" height="2.2" fill="#a4a29a"/>
 <rect x="18" y="10.2" width="6" height="3" fill="#9a9890"/>
 <path d="M14 13 L28 13 L21 20 Z" fill="#9a9890"/>
</svg>
<svg class="a" style="left:26px;top:318px" width="34" height="34" viewBox="0 0 34 34">
 <defs><linearGradient id="pb" x1="0" y1="0" x2="0" y2="1"><stop offset="0" stop-color="#f8a838"/><stop offset="0.6" stop-color="#d88a28"/><stop offset="1" stop-color="#a86010"/></linearGradient>
 <linearGradient id="fr" x1="0" y1="0" x2="0" y2="1"><stop offset="0" stop-color="#c83000"/><stop offset="1" stop-color="#f08020"/></linearGradient></defs>
 <path d="M3 25 V10.5 H30.5 V25" fill="none" stroke="url(#fr)" stroke-width="1.8"/>
 <path d="M2.5 25 H6 V27 H27.5 V25 H31 V32.8 H2.5 Z" fill="url(#pb)" stroke="#b02800" stroke-width="1"/>
 <rect x="9" y="5.2" width="18" height="1.8" fill="#d04010"/>
 <circle cx="16" cy="5.8" r="2.4" fill="#c84a28"/>
 <rect x="12" y="9" width="8" height="4" rx="1" fill="#f09848" stroke="#c04010" stroke-width="0.6"/>
 <rect x="14" y="13" width="4" height="7" fill="#e88a40" stroke="#b03808" stroke-width="0.6"/>
 <path d="M14 15 L18 14 M14 17.5 L18 16.5" stroke="#b03808" stroke-width="0.8"/>
 <rect x="7.5" y="20" width="18" height="4" fill="url(#pb)" stroke="#b83008" stroke-width="0.6"/>
</svg>
<svg class="a" style="left:24px;top:390px" width="36" height="36" viewBox="0 0 36 36">
 <defs><radialGradient id="ck" cx="0.45" cy="0.4" r="0.65"><stop offset="0" stop-color="#ffe8c8"/><stop offset="0.7" stop-color="#f8bc80"/><stop offset="1" stop-color="#e88848"/></radialGradient></defs>
 <circle cx="21" cy="21" r="12.4" fill="url(#ck)" stroke="#c04a18" stroke-width="1.6"/>
 <path d="M16.6 17.7 L20.2 21.3 L27.4 16" fill="none" stroke="#283070" stroke-width="1.9" stroke-linejoin="round"/>
 <rect x="16.4" y="24.2" width="9.6" height="5.4" fill="#fff" stroke="#8090d0" stroke-width="0.7"/>
 <path d="M18.2 27 H24.4" stroke="#404880" stroke-width="1.6" stroke-dasharray="1.4 0.7"/>
 <path d="M15 4.5 Q8.5 6 5.5 12" fill="none" stroke="#22a022" stroke-width="2.8"/>
 <path d="M1.8 9.8 L9.6 13.6 L3.2 17.5 Z" fill="#30b030"/>
</svg>
<svg class="a" style="left:26px;top:460px" width="34" height="38" viewBox="0 0 34 38">
 <defs><linearGradient id="rtop" x1="0" y1="0" x2="1" y2="0.3"><stop offset="0" stop-color="#d8d8d8"/><stop offset="0.5" stop-color="#fafafa"/><stop offset="1" stop-color="#c8c8cc"/></linearGradient></defs>
 <g transform="translate(0 2.5)">
 <path d="M1 21 L12 17.5 L32 22.5 L21 27.5 Z" fill="url(#rtop)" stroke="#606064" stroke-width="0.9"/>
 <path d="M1 21 L21 27.5 L21 34 L1 27.5 Z" fill="#b8b8bc" stroke="#505054" stroke-width="0.9"/>
 <path d="M21 27.5 L32 22.5 L32 27.5 L21 34 Z" fill="#707078" stroke="#404044" stroke-width="0.9"/>
 <path d="M3 24 L19 29.5 M3 26.5 L19 32" stroke="#f0f0f0" stroke-width="0.8"/>
 <path d="M22.5 31 L28 28" stroke="#40d030" stroke-width="1.8"/>
 <circle cx="28.5" cy="25.5" r="1.8" fill="#e03820" stroke="#802010" stroke-width="0.5"/>
 </g>
 <path d="M14 11 L21 4 L28 11 Z" fill="#e82a00"/>
 <rect x="18" y="11" width="6" height="4.5" fill="#d82000"/>
 <rect x="18" y="16.5" width="6" height="2" fill="#c81800"/>
 <rect x="18" y="20" width="6" height="2" fill="#c81800"/>
</svg>
<svg class="a" style="left:24px;top:528px" width="40" height="40" viewBox="0 0 40 40">
 <defs><linearGradient id="wr" x1="0" y1="0" x2="1" y2="1"><stop offset="0" stop-color="#b0dcee"/><stop offset="0.55" stop-color="#7896c0"/><stop offset="1" stop-color="#3a4888"/></linearGradient></defs>
 <path d="M10 33 L19.5 23.5" stroke="#1c1c64" stroke-width="7.4" stroke-linecap="round"/>
 <path d="M10 33 L19.5 23.5" stroke="url(#wr)" stroke-width="5" stroke-linecap="round"/>
 <circle cx="9.8" cy="33.2" r="1.5" fill="#fff"/>
 <path d="M17.5 24.5 C15.5 18 16.5 12 21 9 C24 7 28 7 30 8.8 L25.5 11.5 C24.2 13 24.2 16 26 17.5 L33.8 13 C34.6 17 34 20.5 32 22 L26 24.5 L21.5 28.5 Z" fill="url(#wr)" stroke="#1c1c64" stroke-width="1.3" stroke-linejoin="round"/>
 <path d="M19.5 18.5 L24 23 M21.5 16.5 L26 21" stroke="#1c1c50" stroke-width="1.6"/>
 <path d="M26.5 23.5 L30.5 26.5" stroke="#303040" stroke-width="2.2"/>
</svg>

</div></body></html>
